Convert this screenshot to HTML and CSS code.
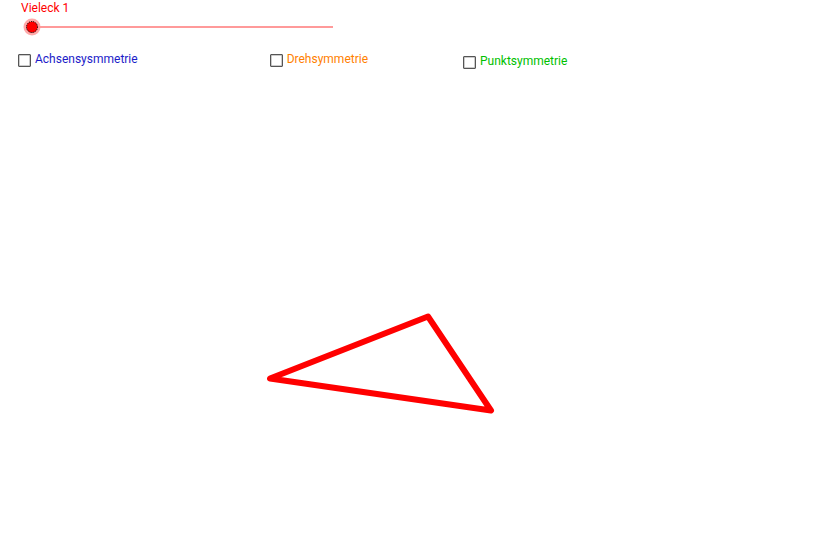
FILE: index.html
```html
<!DOCTYPE html>
<html>
<head>
<meta charset="utf-8">
<link rel="stylesheet" href="styles.css">
</head>
<body>
<div class="app">
  <div class="slider">
    <div class="slider-label">Vieleck 1</div>
    <svg class="slider-track" width="340" height="20" viewBox="0 0 340 20">
      <line x1="32" y1="10" x2="333" y2="10" stroke="#ff9a9a" stroke-width="2"/>
      <circle cx="32" cy="10" r="8.5" fill="#ff9a9a" opacity="0.85"/>
      <circle cx="32" cy="10" r="5.5" fill="#ff0000" stroke="#000" stroke-width="1" stroke-dasharray="1.2 1"/>
    </svg>
  </div>
  <div class="checks">
    <label class="check c1"><span class="box"></span><span class="txt blue">Achsensysmmetrie</span></label>
    <label class="check c2"><span class="box"></span><span class="txt orange">Drehsymmetrie</span></label>
    <label class="check c3"><span class="box"></span><span class="txt green">Punktsymmetrie</span></label>
  </div>
  <svg class="canvas" width="838" height="557" viewBox="0 0 838 557">
    <polygon points="270,378.5 428,316.5 491,410.5" fill="none" stroke="#ff0000" stroke-width="6" stroke-linejoin="round"/>
  </svg>
</div>
</body>
</html>
```
FILE: styles.css
```css
html, body {
  margin: 0;
  padding: 0;
  background: #ffffff;
}
.app {
  position: relative;
  width: 838px;
  height: 557px;
  overflow: hidden;
  font-family: Roboto, "Liberation Sans", sans-serif;
  font-size: 12px;
}
.slider {
  display: flex;
  flex-direction: column;
  padding-top: 1px;
}
.slider-label {
  margin-left: 21px;
  color: #ff0000;
  line-height: 14px;
}
.slider-track {
  display: block;
  margin-top: 2px;
}
.checks {
  display: flex;
  align-items: flex-start;
  margin-top: 16px;
}
.check {
  display: flex;
  align-items: center;
  gap: 4px;
  line-height: 14px;
}
.c1 { margin-left: 18px; }
.c2 { margin-left: 132px; }
.c3 { margin-left: 95px; margin-top: 2px; }
.box {
  width: 11px;
  height: 11px;
  border: 1px solid #555;
  border-radius: 1px;
  background: #fff;
  box-shadow: inset 0 0 0 0.5px #999;
}
.txt { position: relative; top: -1px; }
.blue { color: #1c1cc8; }
.orange { color: #ff8000; }
.green { color: #00c000; }
.canvas {
  position: absolute;
  left: 0;
  top: 0;
  pointer-events: none;
}
```
